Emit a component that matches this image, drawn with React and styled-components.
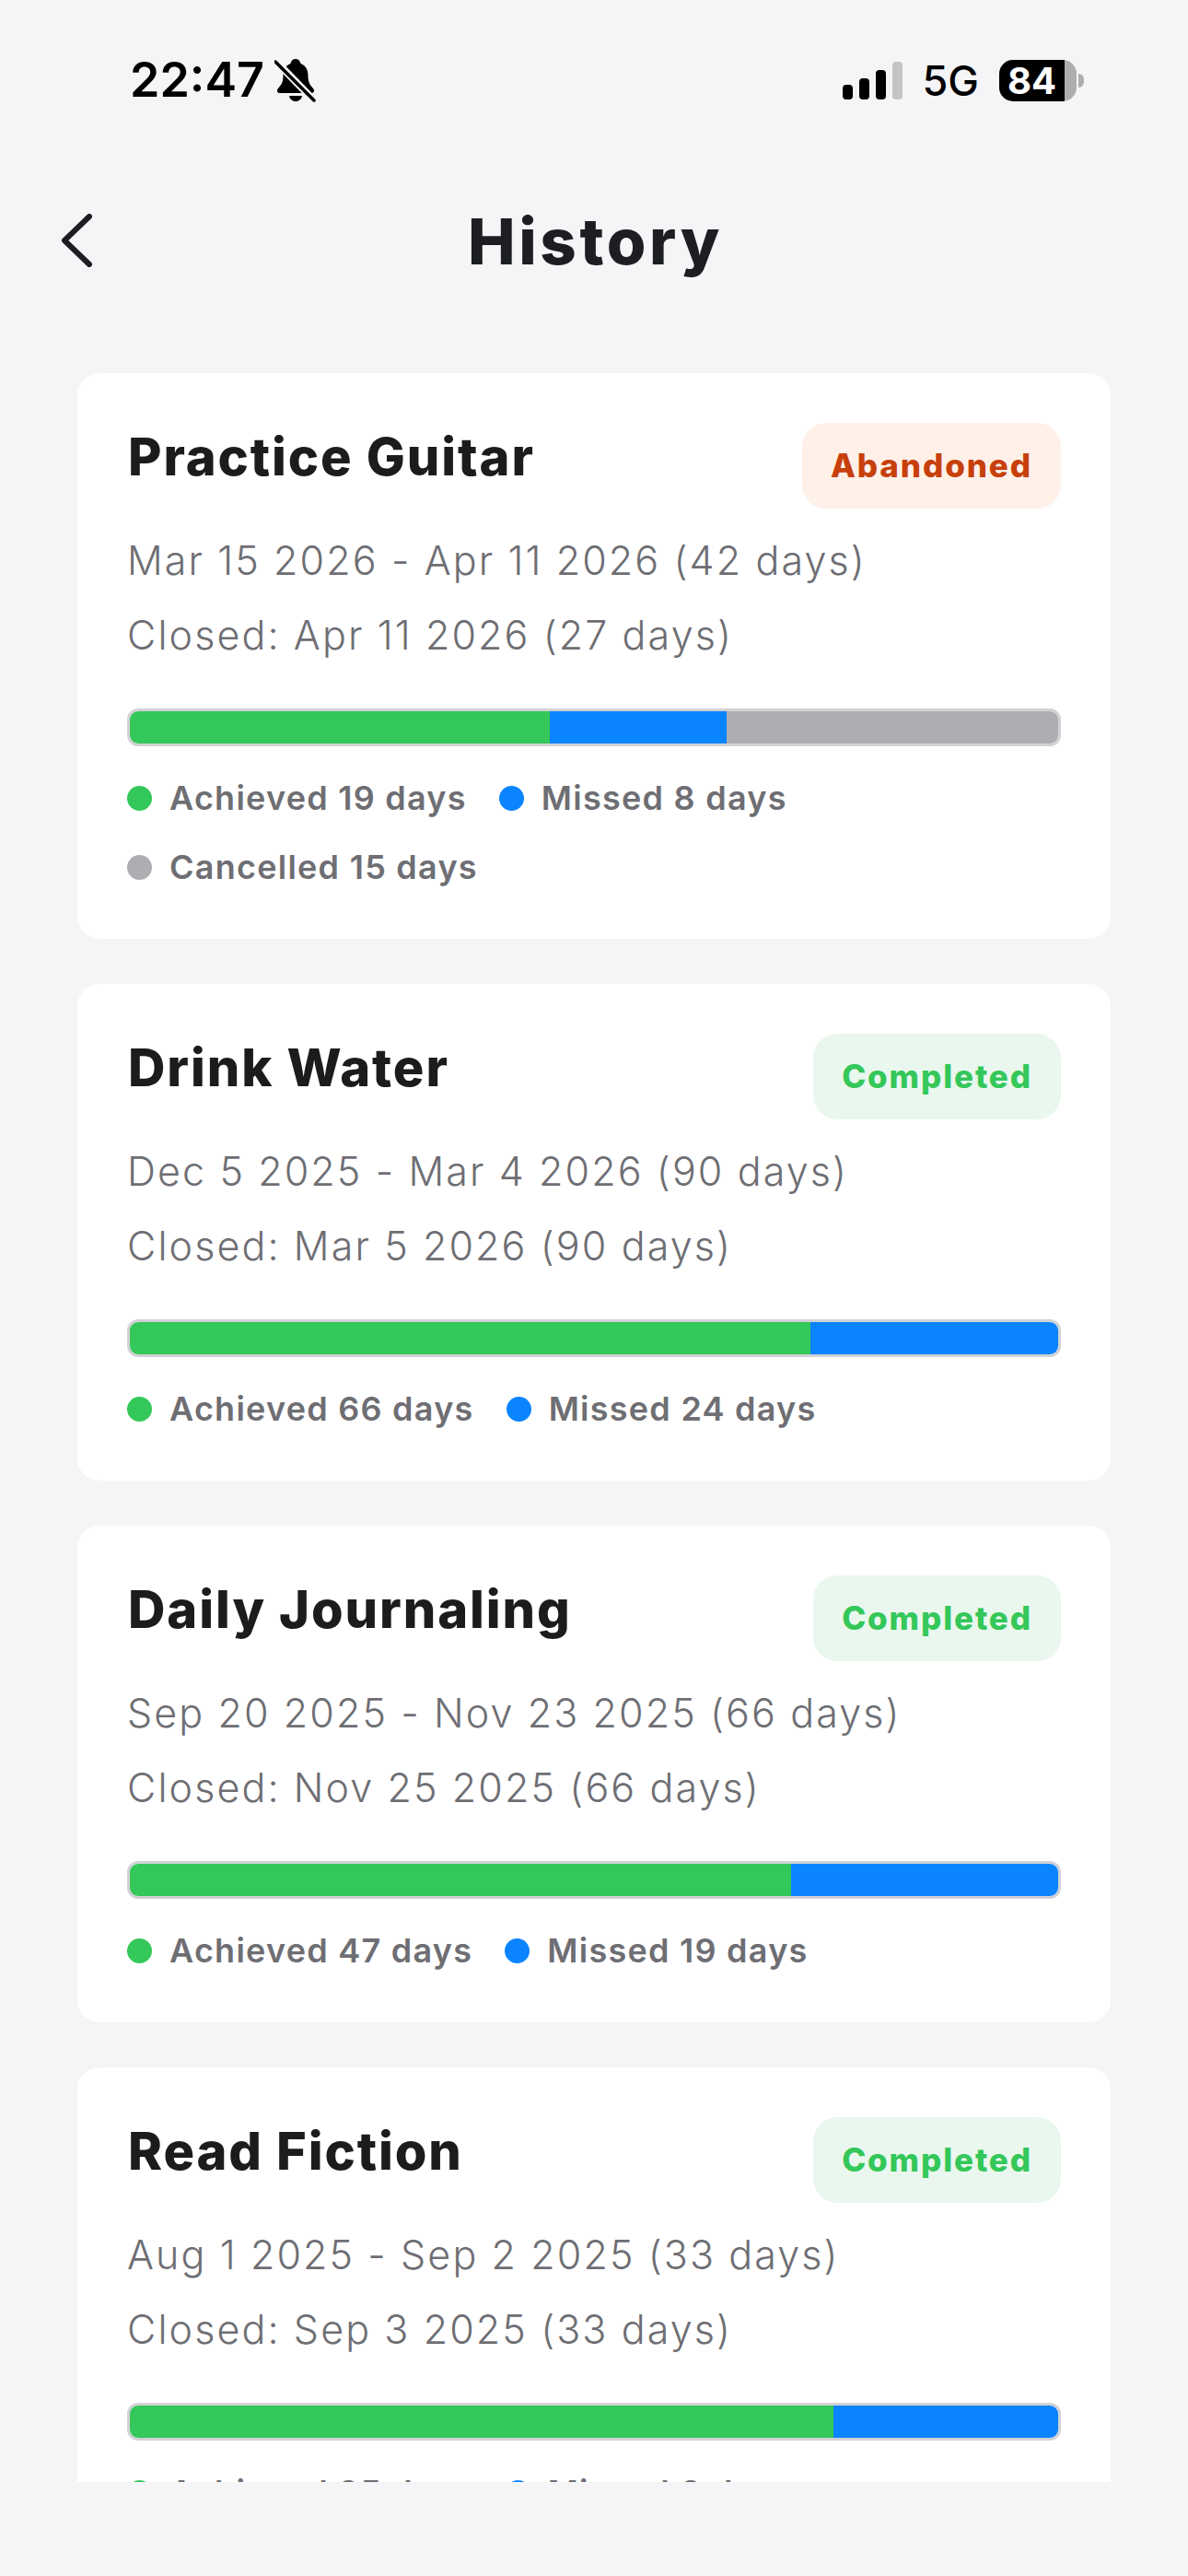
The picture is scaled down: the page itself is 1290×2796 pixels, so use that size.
import styled, { createGlobalStyle } from "styled-components";

const GlobalStyle = createGlobalStyle`
  html, body {
    margin: 0;
    padding: 0;
    background: #f5f5f7;
  }
  * {
    box-sizing: border-box;
  }
`;

const habits = [
  {
    name: "Practice Guitar",
    status: "Abandoned",
    range: "Mar 15 2026 - Apr 11 2026 (42 days)",
    closed: "Closed: Apr 11 2026 (27 days)",
    achieved: 19,
    missed: 8,
    cancelled: 15,
  },
  {
    name: "Drink Water",
    status: "Completed",
    range: "Dec 5 2025 - Mar 4 2026 (90 days)",
    closed: "Closed: Mar 5 2026 (90 days)",
    achieved: 66,
    missed: 24,
  },
  {
    name: "Daily Journaling",
    status: "Completed",
    range: "Sep 20 2025 - Nov 23 2025 (66 days)",
    closed: "Closed: Nov 25 2025 (66 days)",
    achieved: 47,
    missed: 19,
  },
  {
    name: "Read Fiction",
    status: "Completed",
    range: "Aug 1 2025 - Sep 2 2025 (33 days)",
    closed: "Closed: Sep 3 2025 (33 days)",
    achieved: 25,
    missed: 8,
  },
];

const colors = {
  achieved: "#34c759",
  missed: "#0a84ff",
  cancelled: "#aeaeb2",
};

const BellOff = () => (
  <svg width="46" height="50" viewBox="0 0 46 50">
    <path
      d="M23 2c-3 0-5 2-5.500 5C12 9 9.500 14 9.500 20c0 7-2 10-5.500 14-2 2.500-1 5 2 5h34c3 0 4-2.500 2-5-3.500-4-5.500-7-5.500-14 0-6-2.500-11-8-13C28 4 26 2 23 2z"
      fill="#000"
    />
    <path d="M16 42h14c-.5 3.500-3.500 6-7 6s-6.500-2.500-7-6z" fill="#000" />
    <path d="M3 6l40 41" stroke="#f5f5f7" strokeWidth="8" />
    <path d="M1 5l42 42" stroke="#000" strokeWidth="3.500" strokeLinecap="round" />
  </svg>
);

const Signal = () => (
  <svg width="65" height="41" viewBox="0 0 65 41">
    <rect x="0" y="25" width="11" height="16" rx="4" fill="#000" />
    <rect x="18" y="18" width="11" height="23" rx="4" fill="#000" />
    <rect x="36" y="9" width="11" height="32" rx="4" fill="#000" />
    <rect x="54" y="0" width="11" height="41" rx="4" fill="#c4c4c6" />
  </svg>
);

const BackIcon = () => (
  <svg width="36" height="58" viewBox="0 0 36 58">
    <path
      d="M32 3L5 29l27 26"
      fill="none"
      stroke="#1c1e21"
      strokeWidth="6"
      strokeLinecap="round"
      strokeLinejoin="round"
    />
  </svg>
);

const App = () => {
  return (
    <Screen>
      <GlobalStyle />
      <StatusBar>
        <StatusLeft>
          <Time>22:47</Time>
          <BellOff />
        </StatusLeft>
        <StatusRight>
          <Signal />
          <Network>5G</Network>
          <Battery>84</Battery>
        </StatusRight>
      </StatusBar>
      <Header>
        <BackButton>
          <BackIcon />
        </BackButton>
        <Title>History</Title>
      </Header>
      <List>
        {habits.map((habit) => {
          const total = habit.achieved + habit.missed + (habit.cancelled || 0);
          return (
            <Card key={habit.name}>
              <CardTop>
                <Name>{habit.name}</Name>
                <Badge $abandoned={habit.status === "Abandoned"}>{habit.status}</Badge>
              </CardTop>
              <DateLine>{habit.range}</DateLine>
              <DateLine>{habit.closed}</DateLine>
              <Bar>
                <Segment $color={colors.achieved} style={{ width: `${(habit.achieved / total) * 100}%` }} />
                <Segment $color={colors.missed} style={{ width: `${(habit.missed / total) * 100}%` }} />
                {habit.cancelled && (
                  <Segment $color={colors.cancelled} style={{ width: `${(habit.cancelled / total) * 100}%` }} />
                )}
              </Bar>
              <Legend>
                <LegendItem>
                  <Dot $color={colors.achieved} />
                  Achieved {habit.achieved} days
                </LegendItem>
                <LegendItem>
                  <Dot $color={colors.missed} />
                  Missed {habit.missed} days
                </LegendItem>
                {habit.cancelled && (
                  <LegendItem>
                    <Dot $color={colors.cancelled} />
                    Cancelled {habit.cancelled} days
                  </LegendItem>
                )}
              </Legend>
            </Card>
          );
        })}
      </List>
    </Screen>
  );
};
export default App;

const Screen = styled.div`
  width: 1290px;
  height: 2796px;
  overflow: hidden;
  background: #f5f5f7;
  font-family: Inter, "Liberation Sans", sans-serif;
`;
const StatusBar = styled.div`
  height: 176px;
  padding: 62px 121px 0 141px;
  display: flex;
  justify-content: space-between;
  align-items: flex-start;
`;
const StatusLeft = styled.div`
  display: flex;
  align-items: center;
  gap: 11px;
  height: 50px;
`;
const Time = styled.div`
  font-size: 52px;
  font-weight: 600;
  line-height: 50px;
  color: #000;
`;
const StatusRight = styled.div`
  display: flex;
  align-items: center;
  height: 50px;
  svg {
    margin-right: 22px;
  }
`;
const Network = styled.div`
  font-size: 45px;
  font-weight: 500;
  color: #000;
  margin-right: 22px;
`;
const Battery = styled.div`
  position: relative;
  width: 84px;
  height: 45px;
  padding-right: 13px;
  border-radius: 15px;
  background: linear-gradient(to right, #000 71px, #aeaeb0 71px);
  color: #fff;
  font-size: 40px;
  font-weight: 700;
  line-height: 45px;
  text-align: center;
  &::after {
    content: "";
    position: absolute;
    left: 86px;
    top: 15px;
    width: 6px;
    height: 15px;
    border-radius: 0 8px 8px 0;
    background: #aeaeb0;
  }
`;
const Header = styled.div`
  position: relative;
  height: 229px;
  padding-top: 44px;
  padding-left: 3px;
  text-align: center;
`;
const BackButton = styled.div`
  position: absolute;
  left: 65px;
  top: 56px;
`;
const Title = styled.h1`
  margin: 0;
  font-size: 69px;
  font-weight: 800;
  line-height: 84px;
  letter-spacing: 3.6px;
  color: #1c1e21;
`;
const List = styled.div`
  height: 2289px;
  margin: 0 84px;
  overflow: hidden;
  display: flex;
  flex-direction: column;
  gap: 49px;
`;
const Card = styled.div`
  flex-shrink: 0;
  padding: 54px 54px 55px;
  background: #fff;
  border-radius: 24px;
`;
const CardTop = styled.div`
  display: flex;
  justify-content: space-between;
  align-items: flex-start;
  height: 93px;
  margin-bottom: 16px;
`;
const Name = styled.div`
  margin-left: 1px;
  font-size: 56px;
  font-weight: 800;
  line-height: 74px;
  letter-spacing: 1.9px;
  color: #1c1c1e;
`;
const Badge = styled.div`
  height: 93px;
  padding: 0 31px;
  border-radius: 26px;
  font-size: 35px;
  font-weight: 800;
  line-height: 93px;
  letter-spacing: 1.9px;
  color: ${(props) => (props.$abandoned ? "#c7400c" : "#34c759")};
  background: ${(props) => (props.$abandoned ? "#fff0e8" : "#eaf7ee")};
`;
const DateLine = styled.div`
  font-size: 43px;
  font-weight: 300;
  line-height: 81px;
  letter-spacing: 2.1px;
  color: #6e6e73;
`;
const Bar = styled.div`
  display: flex;
  height: 41px;
  margin-top: 39px;
  border: 3px solid #d1d1d6;
  border-radius: 12px;
  overflow: hidden;
`;
const Segment = styled.div`
  height: 100%;
  background: ${(props) => props.$color};
`;
const Legend = styled.div`
  display: flex;
  flex-wrap: wrap;
  column-gap: 35px;
  row-gap: 29px;
  margin-top: 33px;
`;
const LegendItem = styled.div`
  display: flex;
  align-items: center;
  gap: 19px;
  font-size: 36px;
  font-weight: 600;
  line-height: 46px;
  letter-spacing: 1.25px;
  color: #6e6e73;
`;
const Dot = styled.span`
  width: 27px;
  height: 27px;
  border-radius: 50%;
  background: ${(props) => props.$color};
`;
